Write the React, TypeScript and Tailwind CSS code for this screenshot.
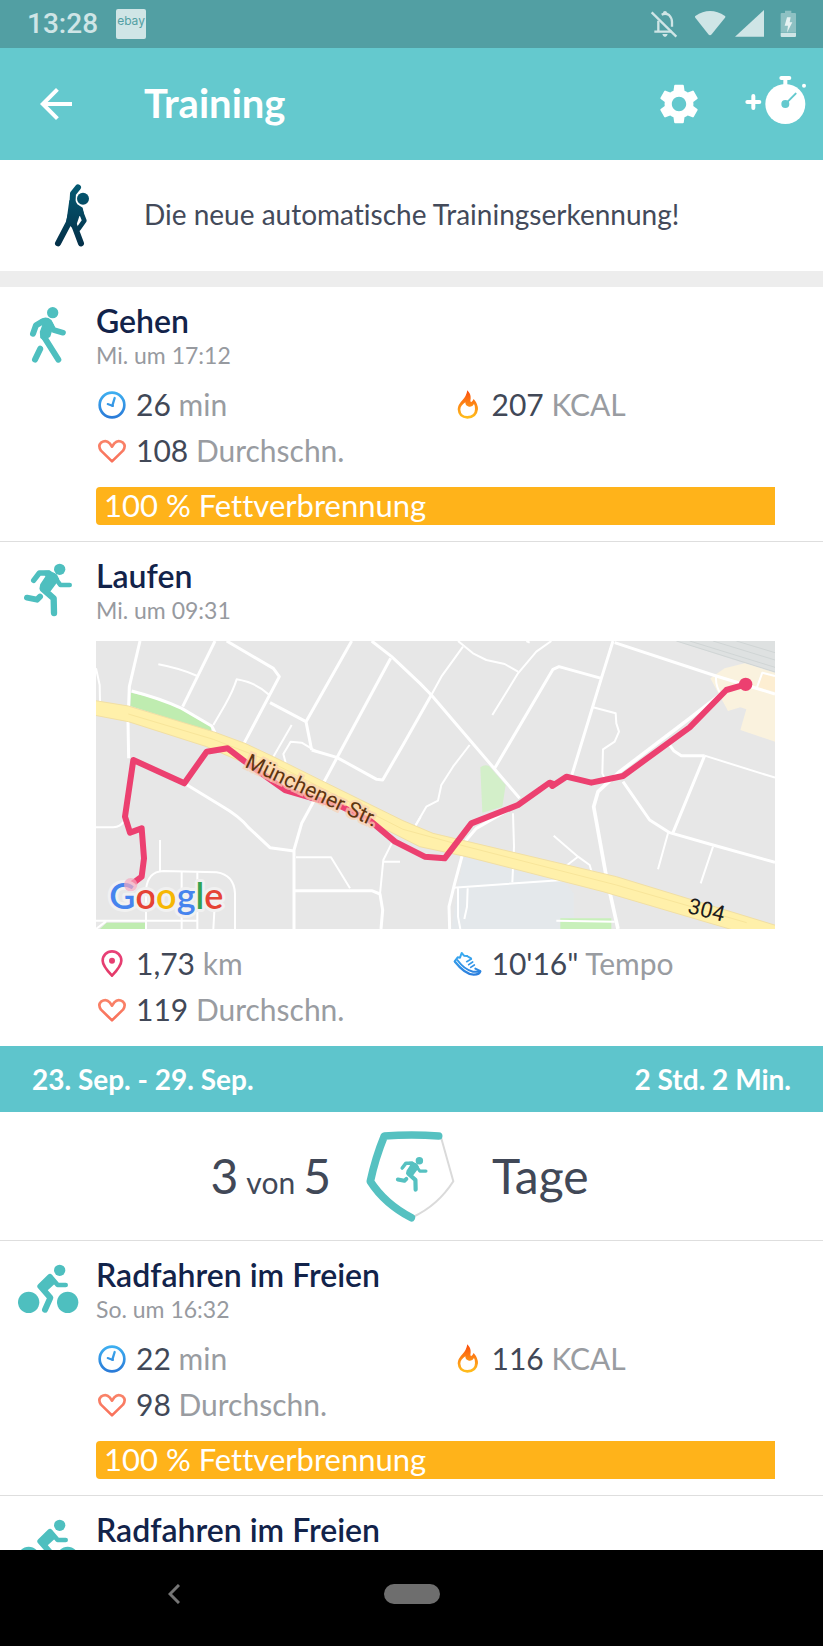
import { useId, type ReactNode } from 'react';
import { MdArrowBack, MdSettings } from 'react-icons/md';

type StatKind = 'time' | 'calories' | 'heart' | 'distance' | 'pace';

interface Stat {
    kind: StatKind;
    value: string;
    unit: string;
}

interface Workout {
    id: string;
    sport: 'walk' | 'run' | 'bike';
    title: string;
    date?: string;
    map?: boolean;
    stats?: Stat[];
    zone?: string;
}

const currentWeek: Workout[] = [
    {
        id: 'w1',
        sport: 'walk',
        title: 'Gehen',
        date: 'Mi. um 17:12',
        stats: [
            { kind: 'time', value: '26', unit: 'min' },
            { kind: 'calories', value: '207', unit: 'KCAL' },
            { kind: 'heart', value: '108', unit: 'Durchschn.' },
        ],
        zone: '100 % Fettverbrennung',
    },
    {
        id: 'w2',
        sport: 'run',
        title: 'Laufen',
        date: 'Mi. um 09:31',
        map: true,
        stats: [
            { kind: 'distance', value: '1,73', unit: 'km' },
            { kind: 'pace', value: '10\'16"', unit: 'Tempo' },
            { kind: 'heart', value: '119', unit: 'Durchschn.' },
        ],
    },
];

const lastWeek: Workout[] = [
    {
        id: 'w3',
        sport: 'bike',
        title: 'Radfahren im Freien',
        date: 'So. um 16:32',
        stats: [
            { kind: 'time', value: '22', unit: 'min' },
            { kind: 'calories', value: '116', unit: 'KCAL' },
            { kind: 'heart', value: '98', unit: 'Durchschn.' },
        ],
        zone: '100 % Fettverbrennung',
    },
    { id: 'w4', sport: 'bike', title: 'Radfahren im Freien' },
];

function StatusIcons() {
    return (
        <svg viewBox="738 24 450 96" className="h-8 w-[150px]" aria-hidden="true">
            <g fill="none" stroke="#cfe5e6" strokeWidth="7">
                <path d="M746 37 820 110" />
                <path d="M766 62V94M754 95H806M776 44Q787 38 798 45Q807 54 807 66V80" />
            </g>
            <g fill="#cfe5e6">
                <circle cx="786" cy="39" r="6" />
                <path d="M778 102H794Q792 111 786 111T778 102Z" />
                <path d="M877 48Q921 18 966 48Q968 50 966 53L926 103Q921 109 916 103L877 53Q875 50 877 48Z" />
                <path d="M996 110 1083 30V110Z" />
            </g>
            <path d="M1146 32H1165V39H1176Q1179 39 1179 42V98H1133V42Q1133 39 1136 39H1146Z" fill="#8ec1c3" />
            <path d="M1133 99H1179V108Q1179 111 1176 111H1136Q1133 111 1133 108Z" fill="#cfe5e6" />
            <path d="M1152 52H1163L1160 67H1168L1152 98L1155 77H1145Z" fill="#e6f2f2" />
        </svg>
    );
}

function StopwatchIcon() {
    return (
        <svg viewBox="1025 222 186 180" className="h-[60px] w-[62px]" aria-hidden="true">
            <g stroke="#fff" strokeWidth="12" strokeLinecap="round" fill="none">
                <path d="M1032 306H1068M1050 288V324" />
                <path d="M1134 234H1158M1146 234V256" />
            </g>
            <circle cx="1146" cy="312" r="60" fill="#fff" />
            <circle cx="1202" cy="257" r="6" fill="#fff" />
            <circle cx="1146" cy="312" r="12" fill="#64c9ce" />
            <path d="M1148 310 1177 281" stroke="#64c9ce" strokeWidth="6" strokeLinecap="round" />
        </svg>
    );
}

function StretchIcon() {
    const id = useId();
    return (
        <svg viewBox="156 542 120 210" className="h-[70px] w-10" aria-hidden="true">
            <defs>
                <linearGradient id={id} gradientUnits="userSpaceOnUse" x1="0" y1="550" x2="0" y2="740">
                    <stop offset="0" stopColor="#045a73" />
                    <stop offset="1" stopColor="#042f48" />
                </linearGradient>
            </defs>
            <g fill="none" stroke={`url(#${id})`} strokeWidth="18" strokeLinecap="round" strokeLinejoin="round">
                <path d="M234 561 219 580 216 630 206 668 174 729" />
                <path d="M220 668 243 729" />
                <path d="M240 628 253 661 236 685" strokeWidth="14" />
            </g>
            <circle cx="249" cy="595" r="18" fill={`url(#${id})`} />
            <path d="M208 600H225L232 612 248 622 252 640 238 648 230 672 224 690 210 676 198 672Z" fill={`url(#${id})`} />
        </svg>
    );
}

function WalkFigure() {
    return (
        <g fill="none" stroke="currentColor" strokeWidth="18" strokeLinecap="round" strokeLinejoin="round">
            <circle cx="158" cy="128" r="17" fill="currentColor" stroke="none" />
            <path d="M99 191 108 166 128 154" />
            <path d="M148 158 161 180 189 188" strokeWidth="17" />
            <path d="M105 269 121 236" />
            <path d="M120 210 137 242" stroke="#fff" strokeWidth="5" />
            <path d="M133 202 175 269" />
            <path d="M124 151Q138 141 152 153L158 165 148 198 132 208 124 202 123 186 130 166Z" fill="currentColor" strokeWidth="7" />
        </g>
    );
}

function RunFigure() {
    return (
        <g fill="none" stroke="currentColor" strokeWidth="16" strokeLinecap="round" strokeLinejoin="round">
            <circle cx="179" cy="58" r="17" fill="currentColor" stroke="none" />
            <path d="M101 91 118 69 146 69" />
            <path d="M160 76 181 105 209 105" strokeWidth="14" />
            <path d="M129 117 161 145 162 189" strokeWidth="19" />
            <path d="M81 143 111 149 120 140" strokeWidth="18" />
            <path d="M134 66 148 65 168 76 174 88 150 120 138 126 122 115 124 104 140 80Z" fill="currentColor" strokeWidth="7" />
        </g>
    );
}

function BikeFigure() {
    return (
        <g fill="none" stroke="currentColor" strokeWidth="18" strokeLinecap="round" strokeLinejoin="round">
            <g fill="currentColor" stroke="none">
                <circle cx="179" cy="121" r="17" />
                <circle cx="86" cy="217" r="32" />
                <circle cx="203" cy="217" r="32" />
            </g>
            <path d="M150 141 121 169 151 203 135 239" />
            <path d="M155 144 173 165 197 165" strokeWidth="14" />
            <path d="M149 138 120 165 137 182 166 156Z" fill="currentColor" strokeWidth="6" />
        </g>
    );
}

function SportIcon({ sport }: { sport: Workout['sport'] }) {
    const views = { walk: '0 51 288 240', run: '0 -24 288 240', bike: '0 33 288 240' };
    return (
        <svg viewBox={views[sport]} className="h-20 w-24 shrink-0 text-[#4ebfbf]" aria-hidden="true">
            {sport === 'walk' && <WalkFigure />}
            {sport === 'run' && <RunFigure />}
            {sport === 'bike' && <BikeFigure />}
        </svg>
    );
}

function StatIcon({ kind }: { kind: StatKind }) {
    const id = useId();
    const colors: Record<StatKind, [string, string]> = {
        time: ['#3fb2f2', '#2a7bd8'],
        calories: ['#fb4e0d', '#ffbc1c'],
        heart: ['#f9866b', '#f9705a'],
        distance: ['#e84179', '#e43a68'],
        pace: ['#3cb4f4', '#2a7bdc'],
    };
    const views: Record<StatKind, string> = {
        time: '288 354 96 96',
        calories: '147 55 96 96',
        heart: '288 492 96 96',
        distance: '288 52 96 96',
        pace: '147 52 96 96',
    };
    const [, y, , h] = views[kind].split(' ').map(Number);
    const paint = `url(#${id})`;
    const shapes: Record<StatKind, ReactNode> = {
        time: (
            <>
                <circle cx="336" cy="405" r="37" />
                <path d="M344 384 337 407" strokeWidth="7" />
                <path d="M323 402 339 408" strokeWidth="6" />
            </>
        ),
        calories: (
            <path
                d="M193 62Q204 73 203 86Q201 94 204 98Q209 95 212 88Q225 103 225 119Q222 147 193 147Q165 146 164 119Q165 105 178 92Q190 80 193 62ZM187 98Q172 108 172 120Q174 139 193 139Q216 138 216 118Q217 110 213 103Q208 113 198 111Q187 109 187 98Z"
                fill={paint}
                fillRule="evenodd"
                stroke="none"
            />
        ),
        heart: (
            <path d="M336 574 303 542Q293 527 303 518Q318 508 329 520L336 530L343 520Q354 508 369 518Q379 527 369 542Z" />
        ),
        distance: (
            <>
                <path d="M336 138Q308 108 308 93A28 28 0 0 1 364 93Q364 108 336 138Z" />
                <circle cx="336" cy="93" r="9" fill={paint} stroke="none" />
            </>
        ),
        pace: (
            <>
                <path d="M155 95 164 83 171 84 176 70 183 78 192 79" strokeWidth="6" />
                <path d="M192 79 204 86M217 117 231 124" strokeWidth="6" />
                <path d="M156 96Q185 133 212 135Q230 135 232 125" strokeWidth="7" />
                <path d="M163 91Q184 120 210 126H229" strokeWidth="6" />
                <path d="M191 96 205 88M197 105 209 97M203 113 214 106" strokeWidth="5" />
            </>
        ),
    };
    return (
        <svg viewBox={views[kind]} className="size-8 shrink-0" aria-hidden="true">
            <defs>
                <linearGradient id={id} gradientUnits="userSpaceOnUse" x1="0" y1={y + 8} x2="0" y2={y + h - 8}>
                    <stop offset="0" stopColor={colors[kind][0]} />
                    <stop offset="1" stopColor={colors[kind][1]} />
                </linearGradient>
            </defs>
            <g fill="none" stroke={paint} strokeWidth="8" strokeLinecap="round" strokeLinejoin="round">
                {shapes[kind]}
            </g>
        </svg>
    );
}

function RouteMap() {
    return (
        <svg viewBox="288 273 2037 864" className="block h-auto w-full" role="img" aria-label="Route">
            <rect x="288" y="273" width="2037" height="864" fill="#e7e7e7" />

            {/* parks, station and campus */}
            <path d="M393 428Q480 445 545 478L636 530 632 545 391 468Z" fill="#bfecb0" />
            <path d="M300 1137 320 1118H435V1137Z" fill="#bfecb0" />
            <g transform="translate(1209 240)">
                <path d="M180 680 480 750 512 790V897H145Z" fill="#e4e8eb" />
                <path d="M232 412Q245 402 258 408L308 465 298 530 238 548Z" fill="#d3efc9" />
                <path d="M472 865H625V897H472Z" fill="#c8f0ba" />
                <path d="M820 33H1116V130Z" fill="#dee1e1" />
                <path d="M860 33 1116 112M930 33 1116 90M1000 33 1116 68M820 33 1116 126" stroke="#d0d5d5" strokeWidth="3" fill="none" />
                <path d="M922 145 965 115 1025 100 1116 128V335L1012 300 1030 238 1012 232 975 243Z" fill="#faf2de" />
                <path d="M1078 128 1116 138V185L1065 172Z" fill="#fdeed2" />
            </g>

            {/* side streets */}
            <g fill="none" stroke="#fff" strokeWidth="6" strokeLinejoin="round">
                <path d="M288 355 299 405 300 455" />
                <path d="M475 343Q540 355 592 378" />
                <path d="M640 525 675 465Q700 420 710 388Q770 398 808 435" />
                <path d="M875 525 820 620M857 638 850 612 872 575 905 578 950 605" />
                <path d="M888 922H993L1050 1015M1140 1032 1150 930 1175 880M1150 935H1200" />
                <path d="M288 832H340Q362 830 370 815" />
                <path d="M480 870V962M438 1137V1020Q442 965 490 963L650 967Q702 975 705 1030V1137" />
                <path d="M545 963V1137M592 967V1137M640 1137 643 1085M288 1112H592M288 1137 318 1114" />
                <path d="M1245 830 1262 800" />
                <g transform="translate(1209 240)">
                    <path d="M165 33 210 70 250 90 305 102 345 125M445 33 400 65 345 130 268 255M370 33 380 38" />
                    <path d="M180 50 115 140 85 195M570 232 638 250 640 280 648 305 635 335 600 358 598 430 612 460" />
                    <path d="M200 345 150 410 115 465 105 512 70 530 38 585" />
                    <path d="M905 377 1116 443M795 610 765 718M930 650 893 760" />
                    <path d="M330 550 333 650 328 757M452 617 525 680 560 705 567 730M525 680 480 715" />
                    <path d="M150 773 480 750M165 775V860L172 897M194 775 192 830 184 867M460 872 635 875" />
                    <path d="M940 135Q935 165 955 195M1116 138 1078 128 1062 172" />
                </g>
            </g>

            {/* larger streets */}
            <g fill="none" stroke="#fff" strokeWidth="9" strokeLinejoin="round">
                <path d="M420 273 388 410 384 515 386 625" />
                <path d="M645 273 548 470M395 423Q480 445 545 475L635 528 645 548" />
                <path d="M680 273 820 355 838 380 732 580" />
                <path d="M1055 273 918 515 935 600M810 458 918 515M935 600 1010 622 1130 688 1148 690 1209 585 1294 435" />
                <path d="M1115 273 1175 320 1260 400 1294 435 1559 745" />
                <path d="M1172 325 1010 625 935 765 905 820 882 900V1137" />
                <path d="M400 630 553 700 660 765Q720 800 745 832L810 893 882 903" />
                <path d="M885 1022H1115L1140 1032 1148 1080 1143 1137" />
                <g transform="translate(1209 240)">
                    <path d="M630 33 595 145 505 440M595 145 468 110 450 118 275 415M635 38 930 135 1116 192" />
                    <path d="M970 180 860 265 650 425 585 485 572 530 610 740 645 897" strokeWidth="11" />
                    <path d="M660 455 740 570 800 608 930 645 1116 697M905 377 810 608M905 377H835L812 362 800 345" />
                    <path d="M440 465 350 520 220 595 190 630 155 760 138 830 140 897" />
                </g>
            </g>

            {/* federal road 304 */}
            <path
                d="M280 451 385 468 640 545 735 580 820 620 965 692 1209 812 1299 850 1849 980 2340 1130V1180L2189 1137 1809 1025 1399 920 1259 890 1170 845 1050 790 735 640 620 590 385 515 280 495Z"
                fill="#fff0aa"
                stroke="#f1dfa4"
                strokeWidth="3"
            />
            <path d="M385 492 640 568 800 630 1209 838 1400 890 1849 1005 2240 1118" fill="none" stroke="#f8e59a" strokeWidth="3" />

            {/* recorded track */}
            <path
                d="M392 1005 425 980 432 925 425 835 390 848 375 800 400 630 553 700 620 605 683 595 735 635 855 720 1025 770 1110 812 1185 875 1274 920 1334 925 1414 820 1554 765 1649 698 1661 702 1657 708 1699 680 1774 698 1869 678 2069 532 2179 420 2237 403"
                fill="none"
                stroke="#ec4070"
                strokeWidth="18"
                strokeLinejoin="round"
            />
            <circle cx="2237" cy="403" r="20" fill="#ec4070" />

            <text
                transform="translate(732 650) rotate(25)"
                fontFamily="Roboto, sans-serif"
                fontSize="64"
                fill="#5e3510"
                stroke="#fbd0b4"
                strokeOpacity="0.7"
                strokeWidth="14"
                paintOrder="stroke"
            >
                Münchener Str.
            </text>
            <text
                transform="translate(2060 1088) rotate(14)"
                fontFamily="Roboto, sans-serif"
                fontSize="66"
                fill="#1c1c1c"
            >
                304
            </text>
            <text
                x="328"
                y="1078"
                fontFamily="Lato, sans-serif"
                fontWeight="600"
                fontSize="108"
                stroke="#f1f1f1"
                strokeWidth="18"
                strokeLinejoin="round"
                paintOrder="stroke"
            >
                <tspan fill="#4684ee">G</tspan>
                <tspan fill="#e54335">o</tspan>
                <tspan fill="#f6b704">o</tspan>
                <tspan fill="#4684ee">g</tspan>
                <tspan fill="#34a352">l</tspan>
                <tspan fill="#e54335">e</tspan>
            </text>
            <circle cx="392" cy="1004" r="20" fill="#f5a9c1" fillOpacity="0.7" />
        </svg>
    );
}

function WorkoutEntry({ workout }: { workout: Workout }) {
    return (
        <article className="flex border-b border-[#dedede] last:border-b-0">
            <SportIcon sport={workout.sport} />
            <div className="min-w-0 flex-1 pt-3.5 pr-4">
                <h2 className="text-[32px] leading-10 font-semibold text-[#12234a]">{workout.title}</h2>
                {workout.date && <p className="text-[23px] leading-7 text-[#979a9f]">{workout.date}</p>}
                {workout.map && (
                    <div className="mt-[17px] mr-8 -mb-px">
                        <RouteMap />
                    </div>
                )}
                {workout.stats && (
                    <ul className="mt-3 mb-3.5 grid grid-cols-2">
                        {workout.stats.map(stat => (
                            <li key={stat.kind} className="flex h-[46px] items-center gap-2 text-[30px] text-[#999ca1]">
                                <StatIcon kind={stat.kind} />
                                <span>
                                    <span className="text-[#414857]">{stat.value}</span> {stat.unit}
                                </span>
                            </li>
                        ))}
                    </ul>
                )}
                {workout.zone && (
                    <p className="mr-8 mb-4 h-[38px] rounded-l-sm bg-[#ffb31a] px-2 text-[31px] leading-9 text-white">
                        {workout.zone}
                    </p>
                )}
            </div>
        </article>
    );
}

function GoalBadge() {
    return (
        <svg viewBox="38 30 291 291" className="size-[97px] text-[#56c1c1]" aria-hidden="true">
            <path d="M272 58 309 190Q263 262 188 297" fill="none" stroke="#dadada" strokeWidth="6" />
            <path
                d="M265 54Q185 48 102 54Q75 120 60 190Q103 257 183 299"
                fill="none"
                stroke="currentColor"
                strokeWidth="23"
                strokeLinecap="round"
                strokeLinejoin="round"
            />
            <g transform="translate(89 90) scale(0.66)">
                <RunFigure />
            </g>
        </svg>
    );
}

export default function App() {
    return (
        <div className="flex h-screen flex-col bg-white font-[Lato,sans-serif] [font-variant-ligatures:none]">
            <div className="flex h-12 shrink-0 items-center bg-[#529fa3] pr-6 pl-[27px]">
                <span className="font-[Roboto,sans-serif] text-[28px] font-medium text-[#cfe5e6]">13:28</span>
                <span className="ml-[18px] flex size-[30px] items-start justify-center rounded-xs bg-[#cfe5e6] pt-1 font-[Inter,sans-serif] text-xs text-[#529fa3]">
                    ebay
                </span>
                <span className="ml-auto">
                    <StatusIcons />
                </span>
            </div>

            <header className="flex h-28 shrink-0 items-center bg-[#64c9ce] pr-4 pl-8 text-white">
                <button type="button" aria-label="Zurück">
                    <MdArrowBack size={48} />
                </button>
                <h1 className="ml-16 pb-0.5 text-[40px] leading-12 font-bold">Training</h1>
                <button type="button" aria-label="Einstellungen" className="ml-auto">
                    <MdSettings size={48} />
                </button>
                <button type="button" aria-label="Training starten" className="ml-[42px]">
                    <StopwatchIcon />
                </button>
            </header>

            <main className="min-h-0 flex-1 overflow-y-auto [scrollbar-width:none]">
                <a href="#erkennung" className="flex h-[127px] items-center border-b-16 border-[#ededed] pl-[52px]">
                    <StretchIcon />
                    <span className="ml-13 pb-1 text-[28px] text-[#434a5a]">Die neue automatische Trainingserkennung!</span>
                </a>

                <section>
                    {currentWeek.map(workout => (
                        <WorkoutEntry key={workout.id} workout={workout} />
                    ))}
                </section>

                <section>
                    <div className="flex h-[66px] items-center justify-between bg-[#5ec5cc] px-8 text-[28px] font-bold text-white">
                        <h2>23. Sep. - 29. Sep.</h2>
                        <p>2 Std. 2 Min.</p>
                    </div>
                    <div className="grid h-[129px] grid-cols-[1fr_auto_1fr] items-center gap-8 border-b border-[#dedede] text-5xl text-[#414857]">
                        <p className="flex items-baseline justify-end gap-2">
                            3 <span className="text-[30px]">von</span> 5
                        </p>
                        <GoalBadge />
                        <p>Tage</p>
                    </div>
                    {lastWeek.map(workout => (
                        <WorkoutEntry key={workout.id} workout={workout} />
                    ))}
                </section>
            </main>

            <nav className="grid h-24 shrink-0 grid-cols-[1fr_auto_1fr] items-center bg-black pb-2">
                <button type="button" aria-label="Zurück" className="mr-9 justify-self-center">
                    <svg viewBox="0 0 12 20" className="h-5 w-3" fill="none" stroke="#757575" strokeWidth="3">
                        <path d="M11 1 2 10 11 19" />
                    </svg>
                </button>
                <button type="button" aria-label="Startbildschirm" className="h-5 w-14 rounded-full bg-[#6e6e6e]" />
            </nav>
        </div>
    );
}
